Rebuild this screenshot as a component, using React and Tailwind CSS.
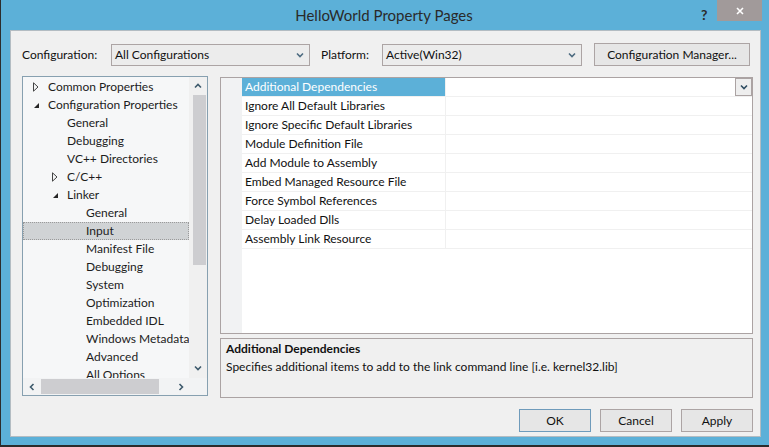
import { useState } from 'react';

const FONT = { fontFamily: 'Lato, "Noto Sans", sans-serif' };

const TREE = [
  { t: 'Common Properties', lvl: 0, tri: 'closed' },
  { t: 'Configuration Properties', lvl: 0, tri: 'open' },
  { t: 'General', lvl: 1 },
  { t: 'Debugging', lvl: 1 },
  { t: 'VC++ Directories', lvl: 1 },
  { t: 'C/C++', lvl: 1, tri: 'closed' },
  { t: 'Linker', lvl: 1, tri: 'open' },
  { t: 'General', lvl: 2 },
  { t: 'Input', lvl: 2 },
  { t: 'Manifest File', lvl: 2 },
  { t: 'Debugging', lvl: 2 },
  { t: 'System', lvl: 2 },
  { t: 'Optimization', lvl: 2 },
  { t: 'Embedded IDL', lvl: 2 },
  { t: 'Windows Metadata', lvl: 2 },
  { t: 'Advanced', lvl: 2 },
  { t: 'All Options', lvl: 2 },
];

const PROPS = [
  'Additional Dependencies',
  'Ignore All Default Libraries',
  'Ignore Specific Default Libraries',
  'Module Definition File',
  'Add Module to Assembly',
  'Embed Managed Resource File',
  'Force Symbol References',
  'Delay Loaded Dlls',
  'Assembly Link Resource',
];

const padFor = ['pl-[25px]', 'pl-[44px]', 'pl-[63px]'];

// small chevron used in combos and scrollbars
function Chevron({ dir = 'down', className = '' }) {
  const d = {
    down: 'M1 1.5 L4 4.5 L7 1.5',
    up: 'M1 4.5 L4 1.5 L7 4.5',
    left: 'M4.5 1 L1.5 4 L4.5 7',
    right: 'M1.5 1 L4.5 4 L1.5 7',
  }[dir];
  const box = dir === 'down' || dir === 'up' ? '0 0 8 6' : '0 0 6 8';
  const size = dir === 'down' || dir === 'up' ? 'w-[8px] h-[6px]' : 'w-[6px] h-[8px]';
  return (
    <svg viewBox={box} className={`${size} ${className}`} fill="none" stroke="currentColor" strokeWidth={1.6}>
      <path d={d} />
    </svg>
  );
}

function Triangle({ open }) {
  return open ? (
    <svg viewBox="0 0 7 7" className="w-[7px] h-[7px] text-[#262626]">
      <path d="M6 1 L6 6 L1 6 Z" fill="currentColor" />
    </svg>
  ) : (
    <svg viewBox="0 0 6 10" className="w-[6px] h-[10px] text-[#444]">
      <path d="M0.5 0.8 L5 5 L0.5 9.2 Z" fill="none" stroke="currentColor" strokeWidth={1} />
    </svg>
  );
}

function Combo({ value, width }) {
  return (
    <div className={`${width} h-[22px] border border-[#aca4a4] bg-[#ececec] flex items-center justify-between pl-[3px] pr-[5px] text-[12px] text-[#111]`}>
      <span>{value}</span>
      <Chevron className="text-[#4d6b80]" />
    </div>
  );
}

function Button({ children, primary }) {
  return (
    <button className={`w-[72px] h-[23px] border ${primary ? 'border-[#6f9bbb]' : 'border-[#aca4a4]'} bg-[#e6e6e6] text-[12px] text-[#111] flex items-center justify-center`}>
      {children}
    </button>
  );
}

export default function App() {
  const [sel] = useState(8);

  return (
    <div className="w-[769px] h-[447px] bg-[#5cb0d8] border-l border-b-2 border-[#2c2c2c] flex flex-col overflow-hidden" style={FONT}>
      {/* title bar */}
      <div className="relative h-[30px] shrink-0 flex items-center justify-center">
        <span className="text-[15px] text-[#2a2a2a] pr-[2px]">HelloWorld Property Pages</span>
        <span className="absolute left-[700px] top-[4px] text-[14px] font-bold text-[#2a2a2a]">?</span>
        <div className="absolute left-[716px] top-0 w-[45px] h-[21px] bg-[#a19a9a] flex items-center justify-center">
          <svg viewBox="0 0 8 8" className="w-[8px] h-[8px] text-white" stroke="currentColor" strokeWidth={1.6}>
            <path d="M1 1 L7 7 M7 1 L1 7" />
          </svg>
        </div>
      </div>

      {/* client area */}
      <div className="ml-[9px] w-[751px] h-[407px] bg-[#f0f0f0] border border-[#b3bcc2] flex flex-col">
        {/* configuration row */}
        <div className="mt-[12px] ml-[11px] h-[23px] flex items-center text-[12px] text-[#111]">
          <span className="w-[89px]">Configuration:</span>
          <Combo value="All Configurations" width="w-[199px]" />
          <span className="ml-[11px] w-[61px]">Platform:</span>
          <Combo value="Active(Win32)" width="w-[200px]" />
          <button className="ml-[12px] w-[156px] h-[23px] border border-[#aca4a4] bg-[#e6e6e6] text-[12px] text-[#111]">
            Configuration Manager...
          </button>
        </div>

        <div className="mt-[10px] ml-[11px] flex gap-[12px]">
          {/* tree */}
          <div className="w-[186px] h-[320px] border border-[#87a0b0] bg-[#f6f7f8] flex flex-col">
            <div className="flex h-[301px]">
              <div className="w-[166px] pt-[1px] overflow-hidden text-[12px] text-[#1c1c1c]">
                {TREE.map((n, i) => (
                  <div
                    key={i}
                    className={`relative h-[18px] flex items-center whitespace-nowrap ${padFor[n.lvl]} ${i === sel ? 'bg-[#d0d3d5] outline outline-1 outline-dotted -outline-offset-1 outline-[#9a9a9a]' : ''}`}
                  >
                    {n.tri && (
                      <span className={`absolute top-0 h-[18px] flex items-center ${n.lvl === 0 ? 'left-[10px]' : 'left-[29px]'}`}>
                        <Triangle open={n.tri === 'open'} />
                      </span>
                    )}
                    {n.t}
                  </div>
                ))}
              </div>
              <div className="w-[18px] flex flex-col items-center bg-[#f0f0f0]">
                <div className="h-[18px] flex items-center justify-center">
                  <Chevron dir="up" className="text-[#3e5a6c]" />
                </div>
                <div className="w-[13px] h-[170px] ml-[2px] bg-[#cdcdd0]" />
                <div className="flex-1" />
                <div className="h-[18px] flex items-center justify-center mb-[1px]">
                  <Chevron dir="down" className="text-[#3e5a6c]" />
                </div>
              </div>
            </div>
            <div className="h-[17px] flex items-center bg-[#f2f3f4]">
              <div className="w-[18px] flex items-center justify-center">
                <Chevron dir="left" className="text-[#3e5a6c]" />
              </div>
              <div className="w-[118px] h-[15px] bg-[#cdcdd0]" />
              <div className="flex-1" />
              <div className="w-[18px] flex items-center justify-center">
                <Chevron dir="right" className="text-[#3e5a6c]" />
              </div>
              <div className="w-[17px]" />
            </div>
          </div>

          {/* right column */}
          <div className="w-[533px] mt-[1px] flex flex-col">
            <div className="h-[257px] border border-[#aba3a3] bg-white flex">
              <div className="w-[21px] bg-[#f1f2f3]" />
              <div className="flex-1 flex flex-col">
                {PROPS.map((p, i) => (
                  <div key={p} className="h-[19px] flex border-b border-[#f0f0f0] text-[12px]">
                    <div className={`w-[203px] pl-[3px] flex items-center ${i === 0 ? 'bg-[#5cb0d8] text-white' : 'text-[#111]'}`}>
                      {p}
                    </div>
                    <div className="flex-1 border-l border-[#f0f0f0] flex items-center justify-end">
                      {i === 0 && (
                        <div className="w-[17px] h-[18px] border border-[#aba3a3] bg-[#eeeeee] flex items-center justify-center">
                          <Chevron className="text-[#2f4d62]" />
                        </div>
                      )}
                    </div>
                  </div>
                ))}
              </div>
            </div>

            {/* description */}
            <div className="mt-[4px] h-[60px] border border-[#aba3a3] bg-[#f0f0f0] px-[5px] pt-[1px] text-[12px] text-[#111]">
              <div className="font-bold leading-[17px]">Additional Dependencies</div>
              <div className="leading-[17px] mt-[1px]">Specifies additional items to add to the link command line [i.e. kernel32.lib]</div>
            </div>
          </div>
        </div>

        {/* buttons */}
        <div className="mt-[11px] mr-[7px] flex justify-end gap-[9px]">
          <Button primary>OK</Button>
          <Button>Cancel</Button>
          <Button>Apply</Button>
        </div>
      </div>
    </div>
  );
}
